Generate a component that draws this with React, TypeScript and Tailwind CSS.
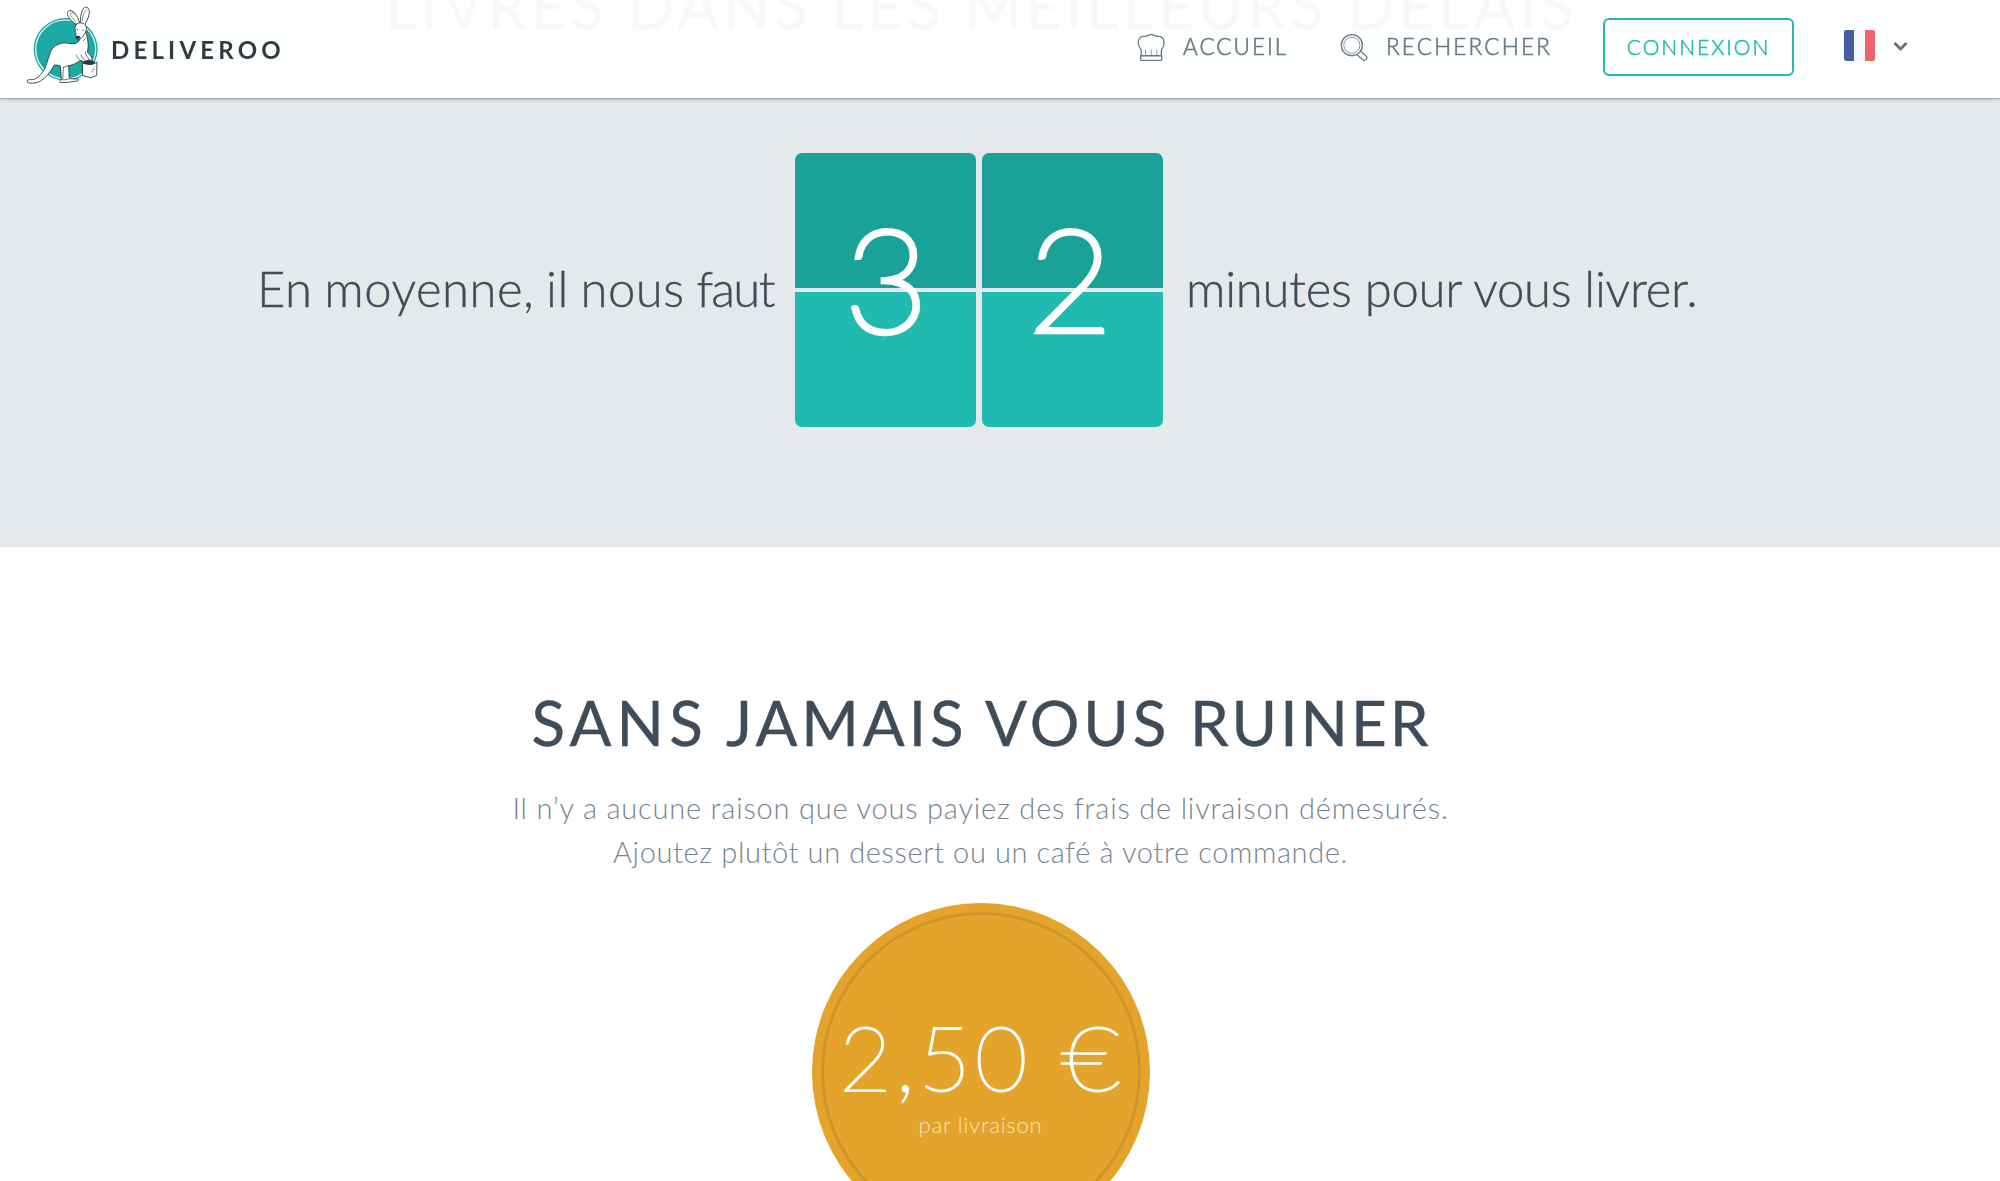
import type { ReactNode } from "react";

function KangarooLogo() {
  return (
    <svg viewBox="75 15 225 240" className="h-[80px] w-[75px] shrink-0" aria-hidden="true">
      <ellipse cx="197" cy="148" rx="96" ry="94" fill="#1da9a3" />
      <ellipse cx="197" cy="148" rx="90" ry="88" fill="none" stroke="#fff" strokeWidth="3.5" />
      <g fill="#fff" stroke="#26383c" strokeWidth="2.6" strokeLinejoin="round" strokeLinecap="round">
        <path d="M231 74C217 67 203 52 202 40C203 30 215 29 222 37C231 47 236 58 240 72Z" />
        <path d="M242 71C240 53 244 30 253 23C261 18 269 26 268 38C267 52 260 63 254 76Z" />
        <path d="M224 41C214 34 208 40 214 50L226 64M261 30C252 32 249 46 247 62" fill="none" strokeWidth="1.6" />
        <path d="M256 92C264 112 267 140 262 156C268 162 276 170 278 182L268 185C262 189 252 186 242 181C230 190 216 196 206 197L208 236L234 237C238 239 236 243 230 243L204 247L181 248C178 246 179 241 184 240L181 198C174 195 166 194 162 196C153 214 138 234 118 245C106 251 90 251 83 247C80 241 84 238 92 239C108 240 122 228 133 208C140 194 143 178 149 164C153 147 165 134 184 130C200 126 220 136 233 127C240 122 240 112 242 104Z" />
        <path d="M230 72C235 67 251 67 255 74C262 82 260 94 252 104C246 113 242 119 234 118C227 117 226 110 228 102C225 92 223 79 230 72Z" />
        <path d="M190 202L188 240L205 238M190 202L206 197M229 165C232 174 238 181 248 186M243 164C245 174 252 181 262 186M256 156C256 164 262 172 268 178M250 122L256 116" fill="none" strokeWidth="2" />
        <path d="M248 190L274 194L291 187L290 226L273 233L249 227Z" />
        <path d="M252 186C262 180 276 180 284 187L274 193L254 191Z" fill="#26383c" />
        <path d="M259 187C262 174 273 176 276 188M274 216L284 208M278 207L282 203" fill="none" strokeWidth="1.8" />
      </g>
      <g fill="#1e2c30">
        <ellipse cx="234" cy="112" rx="6.5" ry="5" />
        <circle cx="232" cy="89" r="2" />
        <circle cx="249" cy="91" r="2" />
      </g>
    </svg>
  );
}

function ChefHatIcon() {
  return (
    <svg viewBox="80 98 88 88" className="size-[29px] shrink-0" fill="none" stroke="#6b7a86" strokeWidth="4" strokeLinejoin="round" aria-hidden="true">
      <path d="M93 167V150C92 146 84 142 84 128C83 113 94 106 105 109C109 105 114 106 116 105C120 102 127 102 131 105C133 106 138 105 141 109C152 106 163 113 162 128C162 142 155 146 154 150V167" />
      <rect x="91" y="167" width="64" height="14" rx="2" />
      <path d="M106 149V165M123 149V165M140 149V165" strokeWidth="2.4" />
    </svg>
  );
}

function SearchIcon() {
  return (
    <svg viewBox="688 98 88 88" className="size-[29px] shrink-0" fill="none" stroke="#6b7a86" strokeWidth="4" strokeLinejoin="round" aria-hidden="true">
      <circle cx="724" cy="135" r="32" />
      <circle cx="724" cy="135" r="24.5" strokeWidth="2.4" />
      <path d="M739 163L756 178C760 182 765 181 768 178C770 175 770 171 767 168L751 153" />
    </svg>
  );
}

function NavLink({ icon, className, children }: { icon: ReactNode; className: string; children: ReactNode }) {
  return (
    <a className={`mt-[33px] flex items-center gap-[17px] text-[22.5px] leading-none font-light text-[#6b7a86] [-webkit-text-stroke:0.6px_#6b7a86] ${className}`}>
      {icon}
      <span className="pb-px">{children}</span>
    </a>
  );
}

function Header() {
  return (
    <header className="fixed inset-x-0 top-0 z-10 flex h-[99px] items-start border-b border-[#a9adb1] bg-white/96 shadow-[0_1px_2px_rgba(0,0,0,0.2)]">
      <a className="ml-[25px] flex w-[300px] gap-[11px] pt-[5px]">
        <KangarooLogo />
        <span className="mt-[33px] text-[24px] leading-none font-bold tracking-[4.2px] text-[#2e3b41]">DELIVEROO</span>
      </a>
      <nav className="ml-auto flex w-[863px] items-start">
        <NavLink icon={<ChefHatIcon />} className="w-[203px] tracking-[2px]">ACCUEIL</NavLink>
        <NavLink icon={<SearchIcon />} className="w-[263px] tracking-[2.2px]">RECHERCHER</NavLink>
        <a className="mt-[18px] flex h-[58px] w-[191px] items-center justify-center rounded-md border-2 border-[#22b9b1] pb-[2px] text-[21px] leading-none font-light tracking-[2px] text-[#22b9b1] [-webkit-text-stroke:0.5px_#22b9b1]">
          CONNEXION
        </a>
        <div className="mt-[30px] ml-[50px] flex items-center gap-[18px]">
          <div className="flex h-[31px] w-[31px] overflow-hidden rounded-[2px]">
            <div className="flex-1 bg-[#475da2]" />
            <div className="flex-1 bg-[#f7f7f7]" />
            <div className="flex-1 bg-[#eb6469]" />
          </div>
          <svg viewBox="0 0 15 11" className="mt-[2px] h-[11px] w-[15px]" fill="none" stroke="#6d7278" strokeWidth="3" aria-hidden="true">
            <path d="M1.5 2L7.5 8L13.5 2" />
          </svg>
        </div>
      </nav>
    </header>
  );
}

function FlipDigit({ className, children }: { className: string; children: ReactNode }) {
  return (
    <div className="relative flex h-[274px] w-[181px] flex-col gap-1">
      <div className="flex-1 rounded-t-[7px] bg-[#1ba298]" />
      <div className="flex-1 rounded-b-[7px] bg-[#20bab1]" />
      <span className={`absolute inset-0 flex items-center justify-center pb-[27px] text-[143px] leading-none font-thin text-white [-webkit-text-stroke:6px_white] [stroke-linejoin:round] ${className}`}>
        {children}
      </span>
    </div>
  );
}

export default function App() {
  return (
    <div className="h-[1181px] w-full overflow-hidden bg-white font-['Lato',sans-serif]">
      <Header />
      <section className="h-[547px] overflow-hidden bg-[#e5e9ec] text-[#3f4d5a]">
        <h2 className="-mt-[26px] pr-[37px] text-center text-[62px] leading-none tracking-[3.87px] whitespace-nowrap">
          LIVRES DANS LES MEILLEURS DELAIS
        </h2>
        <div className="mt-[117px] flex items-center pl-[257px] text-[49px] leading-none font-light whitespace-nowrap">
          <span className="w-[538px] pb-[4px] tracking-[0.5px] [word-spacing:-2px] [-webkit-text-stroke:0.4px_#3f4d5a]">
            En moyenne, il nous <span className="tracking-[-1.6px]">faut</span>
          </span>
          <div className="flex gap-[6px]">
            <FlipDigit className="pl-[2px]">3</FlipDigit>
            <FlipDigit className="pr-[4px]">2</FlipDigit>
          </div>
          <span className="ml-[23px] pb-[4px] tracking-[-0.24px] [-webkit-text-stroke:0.4px_#3f4d5a]">minutes pour vous livrer.</span>
        </div>
      </section>
      <section className="flex flex-col items-center pt-[144px] pr-[37px]">
        <h2 className="text-[62px] leading-none tracking-[3.9px] whitespace-nowrap text-[#3f4d5a] [-webkit-text-stroke:0.4px_#3f4d5a]">
          <span className="tracking-[5.2px]">SANS</span> JAMAIS VOUS <span className="tracking-[3px]">RUINER</span>
        </h2>
        <p className="mt-[33px] mr-[2px] text-center text-[29px] leading-[44px] font-light whitespace-nowrap text-[#77858f]">
          <span className="block tracking-[0.81px]">Il n’y a aucune raison que vous payiez des frais de livraison démesurés.</span>
          <span className="block tracking-[0.62px]">Ajoutez plutôt un dessert ou un café à votre commande.</span>
        </p>
        <div className="mt-[29px] mr-[2px] h-[338px] w-[338px] shrink-0 rounded-full bg-[#e4a32b] p-[9px]">
          <div className="flex h-full w-full flex-col items-center rounded-full border-[3.5px] border-[#cf9429] pt-[95px] text-white">
            <span className="mr-[2px] flex text-[91px] leading-none font-thin tracking-[3.6px] whitespace-nowrap [-webkit-text-stroke:1.8px_white]">
              <span>2,50&nbsp;</span>
              <span className="origin-left scale-x-[1.13] pr-[3px]">€</span>
            </span>
            <span className="mt-[13px] text-[22px] leading-none font-light tracking-[0.79px] text-[#f8e2b8]">par livraison</span>
          </div>
        </div>
      </section>
    </div>
  );
}
